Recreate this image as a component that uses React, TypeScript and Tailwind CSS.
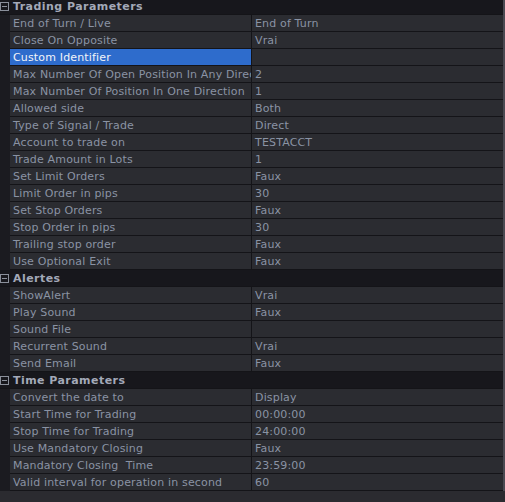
import React from "react";

type Row = { name: string; value: string; selected?: boolean };
type Section = { title: string; rows: Row[] };

const sections: Section[] = [
  {
    title: "Trading Parameters",
    rows: [
      { name: "End of Turn / Live", value: "End of Turn" },
      { name: "Close On Opposite", value: "Vrai" },
      { name: "Custom Identifier", value: "", selected: true },
      { name: "Max Number Of Open Position In Any Direction", value: "2" },
      { name: "Max Number Of Position In One Direction", value: "1" },
      { name: "Allowed side", value: "Both" },
      { name: "Type of Signal / Trade", value: "Direct" },
      { name: "Account to trade on", value: "TESTACCT" },
      { name: "Trade Amount in Lots", value: "1" },
      { name: "Set Limit Orders", value: "Faux" },
      { name: "Limit Order in pips", value: "30" },
      { name: "Set Stop Orders", value: "Faux" },
      { name: "Stop Order in pips", value: "30" },
      { name: "Trailing stop order", value: "Faux" },
      { name: "Use Optional Exit", value: "Faux" },
    ],
  },
  {
    title: "Alertes",
    rows: [
      { name: "ShowAlert", value: "Vrai" },
      { name: "Play Sound", value: "Faux" },
      { name: "Sound File", value: "" },
      { name: "Recurrent Sound", value: "Vrai" },
      { name: "Send Email", value: "Faux" },
    ],
  },
  {
    title: "Time Parameters",
    rows: [
      { name: "Convert the date to", value: "Display" },
      { name: "Start Time for Trading", value: "00:00:00" },
      { name: "Stop Time for Trading", value: "24:00:00" },
      { name: "Use Mandatory Closing", value: "Faux" },
      { name: "Mandatory Closing\u00a0 Time", value: "23:59:00" },
      { name: "Valid interval for operation in second", value: "60" },
    ],
  },
];

function Collapse() {
  return (
    <svg width="9" height="9" viewBox="0 0 9 9" className="block">
      <rect x="0.5" y="0.5" width="8" height="8" fill="none" stroke="#8a8f9a" strokeWidth="1" />
      <line x1="2" y1="4.5" x2="7" y2="4.5" stroke="#8a8f9a" strokeWidth="1" />
    </svg>
  );
}

export default function App() {
  return (
    <div
      className="w-[505px] h-[502px] overflow-hidden bg-[#2b2b30] text-[11px] leading-none tracking-[0.16px]"
      style={{ fontFamily: '"DejaVu Sans", Verdana, sans-serif' }}
    >
      <div className="-mt-[2px] flex flex-col border-r-2 border-[#4a4a52] bg-[#1b1b20] w-[505px]">
        {sections.map((s) => (
          <div key={s.title} className="flex flex-col">
            <div className="flex h-[17px] items-center bg-[#17171c] border-b border-[#141418]">
              <div className="w-[10px] flex justify-start">
                <Collapse />
              </div>
              <span className="pl-[3px] font-bold tracking-[0.45px] text-[#a3a9b8]">{s.title}</span>
            </div>
            {s.rows.map((r) => (
              <div key={r.name} className="flex h-[17px]">
                <div className="w-[10px] shrink-0 bg-[#1b1b20]" />
                <div
                  className={
                    r.selected
                      ? "w-[241px] shrink-0 overflow-hidden whitespace-nowrap flex items-center pl-[3px] bg-[#2e6ccc] text-[#f2f4f8] border-b border-[#141418]"
                      : "w-[241px] shrink-0 overflow-hidden whitespace-nowrap flex items-center pl-[3px] bg-[#2b2c31] text-[#8a93a4] border-b border-[#141418]"
                  }
                >
                  {r.name}
                </div>
                <div className="w-px shrink-0 bg-[#141418]" />
                <div className="flex-1 flex items-center pl-[3px] bg-[#2b2c31] text-[#8a93a4] border-b border-[#141418] whitespace-nowrap overflow-hidden">
                  {r.value}
                </div>
              </div>
            ))}
          </div>
        ))}
      </div>
    </div>
  );
}
